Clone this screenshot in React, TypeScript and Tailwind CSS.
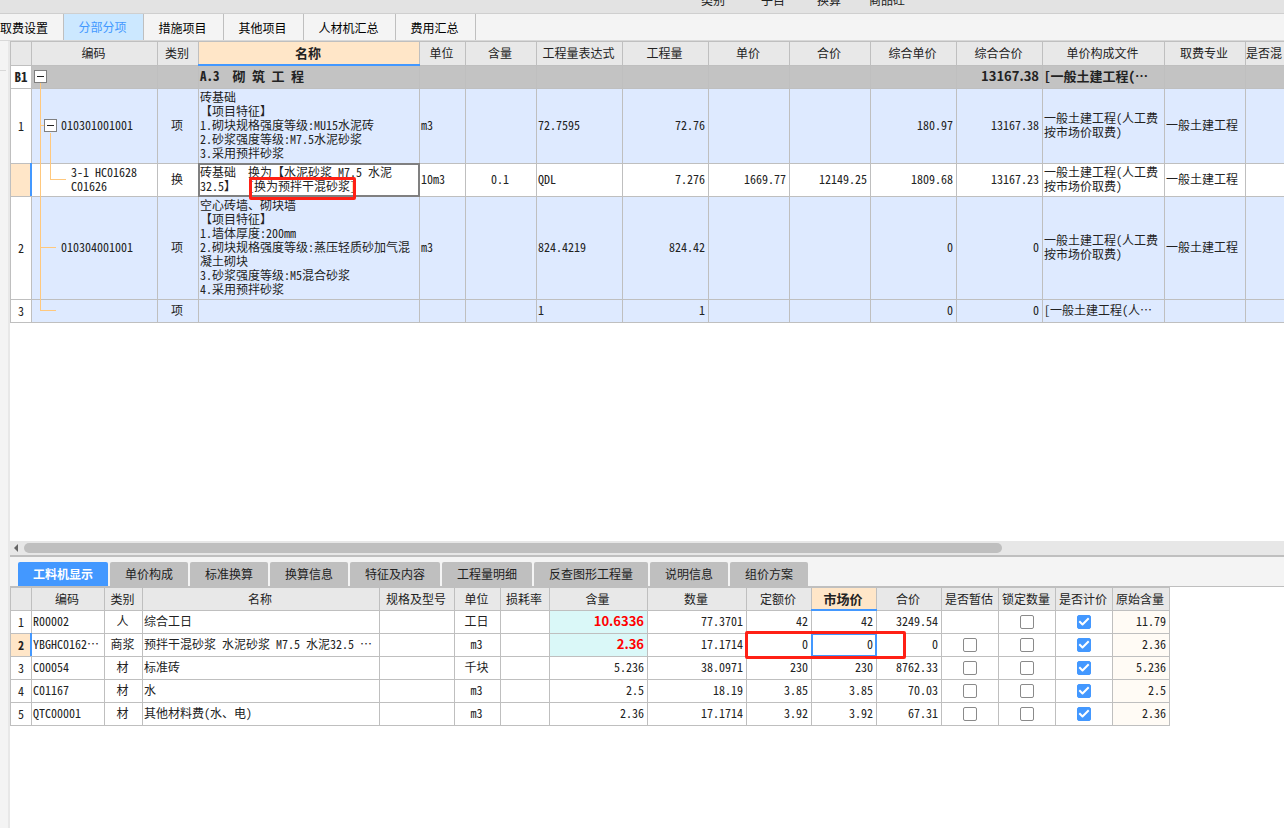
import { clsx } from "clsx";
import { Check } from "lucide-react";

const mainTabs = [
  { label: "取费设置", width: "w-16 pr-4" },
  { label: "分部分项", width: "w-20 pr-0.5", active: true },
  { label: "措施项目", width: "w-20 pr-0.5" },
  { label: "其他项目", width: "w-20 pr-0.5" },
  { label: "人材机汇总", width: "w-[92px] pr-0.5" },
  { label: "费用汇总", width: "w-20 pr-0.5" },
];

const detailTabs = [
  { label: "工料机显示", width: "w-[90px]", active: true },
  { label: "单价构成", width: "w-[78px]" },
  { label: "标准换算", width: "w-[78px]" },
  { label: "换算信息", width: "w-[78px]" },
  { label: "特征及内容", width: "w-[90px]" },
  { label: "工程量明细", width: "w-[90px]" },
  { label: "反查图形工程量", width: "w-[114px]" },
  { label: "说明信息", width: "w-[78px]" },
  { label: "组价方案", width: "w-[78px]" },
];

const itemColumns = [
  { label: "", width: "w-[21px]" },
  { label: "编码", width: "w-[126px]" },
  { label: "类别", width: "w-[41px]" },
  { label: "名称", width: "w-[221px]", active: true },
  { label: "单位", width: "w-[46px]" },
  { label: "含量", width: "w-[71px]" },
  { label: "工程量表达式", width: "w-[86px]" },
  { label: "工程量", width: "w-[86px]" },
  { label: "单价", width: "w-[81px]" },
  { label: "合价", width: "w-[81px]" },
  { label: "综合单价", width: "w-[86px]" },
  { label: "综合合价", width: "w-[86px]" },
  { label: "单价构成文件", width: "w-[122px]" },
  { label: "取费专业", width: "w-[81px]" },
  { label: "是否混", width: "" },
];

const resourceColumns = [
  { label: "", width: "w-[21px]" },
  { label: "编码", width: "w-[73px]" },
  { label: "类别", width: "w-[38px]" },
  { label: "名称", width: "w-[237px]" },
  { label: "规格及型号", width: "w-[75px]" },
  { label: "单位", width: "w-[46px]" },
  { label: "损耗率", width: "w-[49px]" },
  { label: "含量", width: "w-[98px]" },
  { label: "数量", width: "w-[99px]" },
  { label: "定额价", width: "w-[65px]" },
  { label: "市场价", width: "w-[65px]", active: true },
  { label: "合价", width: "w-[65px]" },
  { label: "是否暂估", width: "w-[57px]" },
  { label: "锁定数量", width: "w-[57px]" },
  { label: "是否计价", width: "w-[57px]" },
  { label: "原始含量", width: "w-[57px]" },
];

const resources = [
  { code: "R00002", kind: "人", name: "综合工日", unit: "工日", content: "10.6336", changed: true, amount: "77.3701", base: "42", market: "42", total: "3249.54", origin: "11.79", noEstimate: true },
  { code: "YBGHC0162…", kind: "商浆", name: "预拌干混砂浆 水泥砂浆 M7.5 水泥32.5 …", unit: "m3", content: "2.36", changed: true, amount: "17.1714", base: "0", market: "0", total: "0", origin: "2.36", selected: true },
  { code: "C00054", kind: "材", name: "标准砖", unit: "千块", content: "5.236", amount: "38.0971", base: "230", market: "230", total: "8762.33", origin: "5.236" },
  { code: "C01167", kind: "材", name: "水", unit: "m3", content: "2.5", amount: "18.19", base: "3.85", market: "3.85", total: "70.03", origin: "2.5" },
  { code: "QTC00001", kind: "材", name: "其他材料费(水、电)", unit: "m3", content: "2.36", amount: "17.1714", base: "3.92", market: "3.92", total: "67.31", origin: "2.36" },
];

const border = "relative border-r border-b border-[#bfbfbf]";
const cell = clsx(border, "pt-0 pr-[3px] pb-0.5 pl-px");
const num = "text-right";
const mid = "text-center";
const strong = "text-[13px] font-bold [font-feature-settings:normal]";

function HeadRow({ columns, className }: { columns: { label: string; width: string; active?: boolean }[]; className: string }) {
  return (
    <thead>
      <tr className={className}>
        {columns.map((c, i) => (
          <th
            key={i}
            scope="col"
            className={clsx(
              border,
              "whitespace-nowrap pt-0 pl-0 pr-0.5",
              c.width,
              c.active ? "bg-[#ffe6c8] text-[13px] font-bold" : "bg-[#e8e8e8] font-normal",
            )}
          >
            {c.label}
            {c.active && <span className="absolute -bottom-px -left-px -right-px h-0.5 bg-[#4398ff]" />}
          </th>
        ))}
      </tr>
    </thead>
  );
}

function RowNo({ children, selected }: { children?: string; selected?: boolean }) {
  return (
    <th scope="row" className={clsx(border, mid, "p-0", selected ? "bg-[#ffe6c8] font-bold" : "bg-white font-normal")}>
      {children}
      {selected && <span className="absolute -top-px -right-px bottom-0 w-0.5 bg-[#4398ff]" />}
    </th>
  );
}

function Toggle({ label }: { label: string }) {
  return (
    <button type="button" aria-label={label} className="relative z-10 flex size-[13px] shrink-0 items-center justify-center border border-[#808080] bg-white">
      <span className="h-px w-[7px] bg-[#222]" />
    </button>
  );
}

function Tick({ label, on }: { label: string; on?: boolean }) {
  return (
    <label className="relative mx-auto block size-[14px]">
      <input
        type="checkbox"
        aria-label={label}
        defaultChecked={on}
        className="peer block size-[14px] appearance-none rounded-xs border border-[#8a8a8a] bg-white checked:border-[#4398ff] checked:bg-[#4398ff]"
      />
      <Check className="pointer-events-none absolute inset-px hidden size-3 text-white peer-checked:block" strokeWidth={4} strokeLinecap="square" />
    </label>
  );
}

function ItemTable() {
  const blue = "bg-[#deeaff]";
  const line = "absolute bg-[#ffc87d]";
  return (
    <table className="w-full table-fixed border-separate border-spacing-0 border-t border-l border-[#bfbfbf] [&_tr>*:last-child]:border-r-0">
      <HeadRow columns={itemColumns} className="h-6 [&>th]:pb-0.5" />
      <tbody>
        <tr className="h-[23px] bg-[#c3c3c3] text-[13px] font-bold">
          <th scope="row" className={clsx(border, mid, "bg-white p-0")}>B1</th>
          <td className={cell}>
            <div className="pl-px">
              <Toggle label="折叠 A.3" />
            </div>
            <span className={clsx(line, "-bottom-px left-2 h-1.5 w-px")} />
          </td>
          <td className={cell} />
          <td className={clsx(cell, "whitespace-pre")}>A.3  砌 筑 工 程</td>
          <td className={cell} />
          <td className={cell} />
          <td className={cell} />
          <td className={cell} />
          <td className={cell} />
          <td className={cell} />
          <td className={cell} />
          <td className={clsx(cell, num, strong)}>13167.38</td>
          <td className={clsx(cell, "whitespace-nowrap")}>[一般土建工程(…</td>
          <td className={cell} />
          <td className={cell} />
        </tr>
        <tr className={clsx(blue, "h-[75px]")}>
          <RowNo>1</RowNo>
          <td className={cell}>
            <span className={clsx(line, "top-0 -bottom-px left-2 w-px")} />
            <span className={clsx(line, "top-9 left-2 h-px w-1")} />
            <span className={clsx(line, "top-11 -bottom-px left-[18px] w-px")} />
            <div className="flex items-center gap-1 pl-[11px]">
              <Toggle label="折叠 010301001001" />
              010301001001
            </div>
          </td>
          <td className={clsx(cell, mid)}>项</td>
          <td className={clsx(cell, "whitespace-pre-line")}>
            {"砖基础\n【项目特征】\n1.砌块规格强度等级:MU15水泥砖\n2.砂浆强度等级:M7.5水泥砂浆\n3.采用预拌砂浆"}
          </td>
          <td className={cell}>m3</td>
          <td className={cell} />
          <td className={cell}>72.7595</td>
          <td className={clsx(cell, num)}>72.76</td>
          <td className={cell} />
          <td className={cell} />
          <td className={clsx(cell, num)}>180.97</td>
          <td className={clsx(cell, num)}>13167.38</td>
          <td className={clsx(cell, "whitespace-pre-line")}>{"一般土建工程(人工费\n按市场价取费)"}</td>
          <td className={cell}>一般土建工程</td>
          <td className={cell} />
        </tr>
        <tr className="h-[33px]">
          <RowNo selected />
          <td className={clsx(cell, "whitespace-pre-line")}>
            <span className={clsx(line, "top-0 -bottom-px left-2 w-px")} />
            <span className={clsx(line, "top-0 left-[18px] h-4 w-px")} />
            <span className={clsx(line, "top-[15px] left-[18px] h-px w-4")} />
            <div className="pl-[38px]">{"3-1 HC01628\nC01626"}</div>
          </td>
          <td className={clsx(cell, mid)}>换</td>
          <td className={clsx(cell, "whitespace-pre")}>
            {"砖基础  换为【水泥砂浆 M7.5 水泥\n32.5】  [换为预拌干混砂浆]"}
            <span className="absolute -inset-px border-2 border-[#808080]" />
            <span className="absolute top-[13px] left-[50px] z-10 h-[23px] w-[107px] rounded-xs border-3 border-[#ff2015]" />
          </td>
          <td className={cell}>10m3</td>
          <td className={clsx(cell, mid)}>0.1</td>
          <td className={cell}>QDL</td>
          <td className={clsx(cell, num)}>7.276</td>
          <td className={clsx(cell, num)}>1669.77</td>
          <td className={clsx(cell, num)}>12149.25</td>
          <td className={clsx(cell, num)}>1809.68</td>
          <td className={clsx(cell, num)}>13167.23</td>
          <td className={clsx(cell, "whitespace-pre-line")}>{"一般土建工程(人工费\n按市场价取费)"}</td>
          <td className={cell}>一般土建工程</td>
          <td className={cell} />
        </tr>
        <tr className={clsx(blue, "h-[103px]")}>
          <RowNo>2</RowNo>
          <td className={cell}>
            <span className={clsx(line, "top-0 -bottom-px left-2 w-px")} />
            <span className={clsx(line, "top-[50px] left-2 h-px w-4")} />
            <div className="pl-7">010304001001</div>
          </td>
          <td className={clsx(cell, mid)}>项</td>
          <td className={clsx(cell, "whitespace-pre-line")}>
            {"空心砖墙、砌块墙\n【项目特征】\n1.墙体厚度:200mm\n2.砌块规格强度等级:蒸压轻质砂加气混\n凝土砌块\n3.砂浆强度等级:M5混合砂浆\n4.采用预拌砂浆"}
          </td>
          <td className={cell}>m3</td>
          <td className={cell} />
          <td className={cell}>824.4219</td>
          <td className={clsx(cell, num)}>824.42</td>
          <td className={cell} />
          <td className={cell} />
          <td className={clsx(cell, num)}>0</td>
          <td className={clsx(cell, num)}>0</td>
          <td className={clsx(cell, "whitespace-pre-line")}>{"一般土建工程(人工费\n按市场价取费)"}</td>
          <td className={cell}>一般土建工程</td>
          <td className={cell} />
        </tr>
        <tr className={clsx(blue, "h-[23px]")}>
          <RowNo>3</RowNo>
          <td className={cell}>
            <span className={clsx(line, "top-0 left-2 h-2.5 w-px")} />
            <span className={clsx(line, "top-2.5 left-2 h-px w-4")} />
          </td>
          <td className={clsx(cell, mid)}>项</td>
          <td className={cell} />
          <td className={cell} />
          <td className={cell} />
          <td className={cell}>1</td>
          <td className={clsx(cell, num)}>1</td>
          <td className={cell} />
          <td className={cell} />
          <td className={clsx(cell, num)}>0</td>
          <td className={clsx(cell, num)}>0</td>
          <td className={clsx(cell, "whitespace-nowrap")}>[一般土建工程(人…</td>
          <td className={cell} />
          <td className={cell} />
        </tr>
      </tbody>
    </table>
  );
}

function ResourceTable() {
  return (
    <table className="w-[1160px] table-fixed border-separate border-spacing-0 border-t border-l border-[#bfbfbf]">
      <HeadRow columns={resourceColumns} className="h-[23px] [&>th]:pb-0" />
      <tbody>
        {resources.map((r, i) => (
          <tr key={r.code} className="h-[23px] whitespace-nowrap">
            <RowNo selected={r.selected}>{String(i + 1)}</RowNo>
            <td className={cell}>{r.code}</td>
            <td className={clsx(cell, mid)}>{r.kind}</td>
            <td className={cell}>{r.name}</td>
            <td className={cell} />
            <td className={clsx(cell, mid)}>{r.unit}</td>
            <td className={cell} />
            <td className={clsx(cell, num, r.changed && "bg-[#daf8f8] text-[#ff0000]", r.changed && strong)}>{r.content}</td>
            <td className={clsx(cell, num)}>{r.amount}</td>
            <td className={clsx(cell, num)}>
              {r.base}
              {r.selected && <span className="absolute -top-[3px] -left-0.5 z-20 h-7 w-[161px] rounded-xs border-3 border-[#ff2015]" />}
            </td>
            <td className={clsx(cell, num)}>
              {r.market}
              {r.selected && <span className="absolute -inset-px z-10 border-2 border-[#4398ff]" />}
            </td>
            <td className={clsx(cell, num)}>{r.total}</td>
            <td className={clsx(border, "p-0")}>{!r.noEstimate && <Tick label={`${r.name} 是否暂估`} />}</td>
            <td className={clsx(border, "p-0")}><Tick label={`${r.name} 锁定数量`} /></td>
            <td className={clsx(border, "p-0")}><Tick label={`${r.name} 是否计价`} on /></td>
            <td className={clsx(cell, num, "bg-[#fffbf5]")}>{r.origin}</td>
          </tr>
        ))}
      </tbody>
    </table>
  );
}

export default function App() {
  return (
    <div lang="zh-CN" className="flex min-h-screen flex-col overflow-hidden bg-white font-['Noto_Sans_CJK_SC',sans-serif] text-xs leading-[14px] text-[#222]">
      <header className="flex h-3.5 items-end overflow-hidden border-b border-[#cfcfcf] bg-[#e3e3e3] pb-1.5 pl-[701px]">
        <span className="w-15">类别</span>
        <span className="w-14">子目</span>
        <span className="w-13">换算</span>
        <span>商品砼</span>
      </header>

      <nav className="flex h-[27px] border-b border-[#d8d8d8] bg-[#f4f4f4]">
        {mainTabs.map((t) => (
          <button
            key={t.label}
            type="button"
            className={clsx(
              "shrink-0 whitespace-nowrap border-r border-[#bfbfbf]",
              t.width,
              t.active ? "bg-[#cce8ff] text-[#4398ff]" : "pt-0.5 text-black",
            )}
          >
            {t.label}
          </button>
        ))}
      </nav>

      <div className="flex flex-1">
        <aside className="w-2.5 shrink-0 border-r-2 border-[#e8e8e8] bg-[#f4f4f4] pt-[29px]">
          <div className="h-px w-1.5 bg-[#d8d8d8]" />
        </aside>

        <main className="flex min-w-0 flex-1 flex-col [font-feature-settings:'hwid']">
          <section className="flex-1">
            <ItemTable />
          </section>

          <div className="flex h-4 items-center gap-1.5 border-b-2 border-[#bfbfbf] bg-[#e7e7e7] pl-1">
            <svg viewBox="0 0 4 8" className="h-2 w-1" fill="#666">
              <path d="M4 0v8L0 4z" />
            </svg>
            <div className="h-2.5 w-[77%] rounded-full bg-[#bfbfbf]" />
          </div>

          <section className="min-h-[271px]">
            <div className="flex h-[30px] items-end gap-0.5 border-b border-[#bfbfbf] bg-[#f4f4f4] pl-2">
              {detailTabs.map((t) => (
                <button
                  key={t.label}
                  type="button"
                  className={clsx(
                    "h-6 shrink-0 whitespace-nowrap rounded-t-xs",
                    t.width,
                    t.active ? "bg-[#4398ff] font-bold text-white" : "bg-[#bfbfbf]",
                  )}
                >
                  {t.label}
                </button>
              ))}
            </div>
            <ResourceTable />
          </section>
        </main>
      </div>
    </div>
  );
}
